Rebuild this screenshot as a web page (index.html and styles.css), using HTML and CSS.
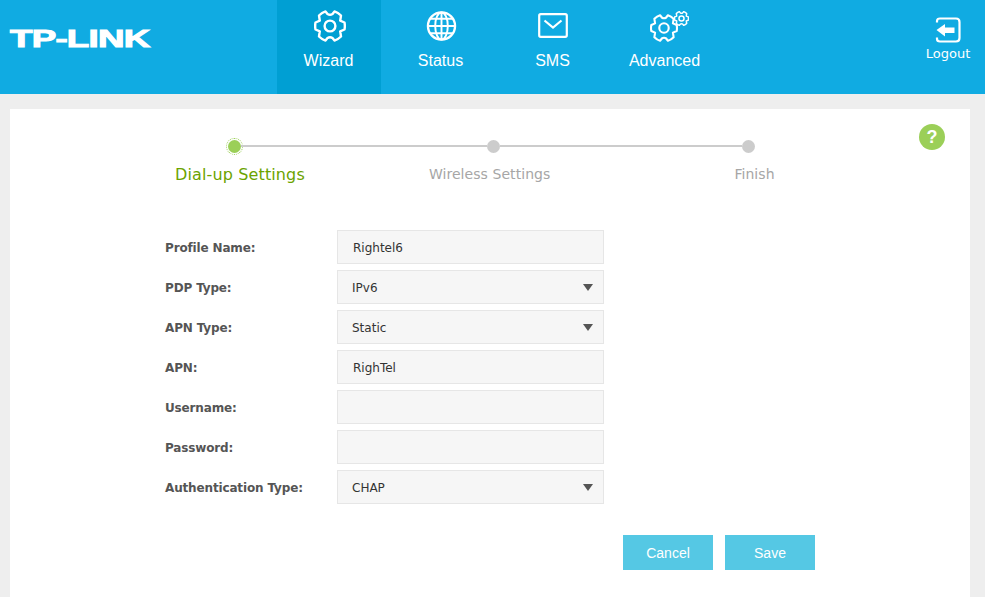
FILE: index.html
```html
<!DOCTYPE html>
<html lang="en">
<head>
<meta charset="utf-8">
<title>TP-LINK Wizard</title>
<link rel="stylesheet" href="styles.css">
</head>
<body>
<svg class="defs" width="0" height="0" aria-hidden="true">
  <symbol id="gear" viewBox="0 0 32 32">
    <path d="M30.5 12.5Q31.2 16 30.5 19.5L26.200 21.300L27 26.500Q24 29.500 20.500 30.600L18.500 28Q16 26.400 13.500 28L11.500 30.600Q8 29.500 5 26.500L5.800 21.300L1.500 19.500Q.8 16 1.500 12.500L5.800 10.700L5 5.500Q8 2.500 11.500 1.400L13.500 4Q16 5.600 18.500 4L20.500 1.400Q24 2.500 27 5.500L26.200 10.700Z" fill="none" stroke="currentColor" stroke-linejoin="round"/>
    <circle cx="16" cy="16" r="5.400" fill="none" stroke="currentColor"/>
  </symbol>
</svg>
<header class="topbar">
  <div class="logo"><span class="logo-text">TP-LINK</span></div>
  <nav class="nav">
    <a class="nav-item active">
      <svg class="icon-gear"><use href="#gear"/></svg>
      <span class="nav-label">Wizard</span>
    </a>
    <a class="nav-item">
      <svg class="icon-globe" viewBox="0 0 32 32" fill="none" stroke="currentColor" stroke-width="2">
        <circle cx="16" cy="16" r="14" stroke-width="2.400"/>
        <ellipse cx="16" cy="16" rx="6.500" ry="14"/>
        <path d="M16 2V30M2 16H30M4.500 8.500H27.500M4.500 23.500H27.500"/>
      </svg>
      <span class="nav-label">Status</span>
    </a>
    <a class="nav-item">
      <svg class="icon-mail" viewBox="0 0 30 25" fill="none" stroke="currentColor" stroke-width="2">
        <rect x="1.200" y="1.200" width="27.600" height="22.600" rx="1.500" stroke-width="2.200"/>
        <path d="M6.500 7.500L15 14.500L23.500 7.500" stroke-width="2.200"/>
      </svg>
      <span class="nav-label">SMS</span>
    </a>
    <a class="nav-item">
      <span class="gears">
        <svg class="icon-gear-main"><use href="#gear"/></svg>
        <svg class="icon-gear-small"><use href="#gear"/></svg>
      </span>
      <span class="nav-label">Advanced</span>
    </a>
  </nav>
  <a class="logout">
    <svg class="icon-logout" viewBox="0 0 26 26">
      <path d="M2 5.500V4Q2 1.500 5 1.500H21Q24.500 1.500 24.500 5V21Q24.500 24.500 21 24.500H5Q2 24.500 2 22V20.500" fill="none" stroke="currentColor" stroke-width="2.200"/>
      <path d="M1.500 13L10 7V10.500H19.500V16H10V19.500Z" fill="currentColor"/>
    </svg>
    <span>Logout</span>
  </a>
</header>
<main class="page">
  <section class="card">
    <a class="help">?</a>
    <div class="track">
      <span class="dot current"></span>
      <span class="line first"></span>
      <span class="dot"></span>
      <span class="line second"></span>
      <span class="dot"></span>
    </div>
    <div class="steps">
      <span class="step current">Dial-up Settings</span>
      <span class="step wireless">Wireless Settings</span>
      <span class="step finish">Finish</span>
    </div>
    <form class="form">
      <label class="row"><span class="name">Profile Name:</span><input class="field" value="Rightel6"></label>
      <label class="row"><span class="name">PDP Type:</span><span class="choice"><select class="field pick"><option>IPv6</option></select></span></label>
      <label class="row"><span class="name">APN Type:</span><span class="choice"><select class="field pick"><option>Static</option></select></span></label>
      <label class="row"><span class="name">APN:</span><input class="field" value="RighTel"></label>
      <label class="row"><span class="name">Username:</span><input class="field"></label>
      <label class="row"><span class="name">Password:</span><input class="field" type="password"></label>
      <label class="row"><span class="name">Authentication Type:</span><span class="choice"><select class="field pick"><option>CHAP</option></select></span></label>
      <div class="actions">
        <button class="btn" type="button">Cancel</button>
        <button class="btn" type="button">Save</button>
      </div>
    </form>
  </section>
</main>
</body>
</html>
```
FILE: styles.css
```css
* { box-sizing: border-box; }
html, body { height: 100%; }
body {
  margin: 0;
  background: #eeeeee;
  overflow: hidden;
  font-family: "DejaVu Sans", Verdana, sans-serif;
}
.defs { display: block; position: absolute; }
.topbar {
  display: flex;
  height: 94px;
  background: #10abe2;
  color: #fff;
}
.logo { width: 277px; padding: 26px 0 0 10px; }
.logo-text {
  display: block;
  width: 142px;
  font: 900 24px/26px "Liberation Sans", Arial, sans-serif;
  -webkit-text-stroke: 1px #fff;
  transform: scaleX(1.53);
  transform-origin: 0 50%;
  letter-spacing: -0.5px;
}
.nav { display: flex; gap: 8px; flex: 1; }
.nav-item {
  display: flex;
  flex-direction: column;
  align-items: center;
  width: 104px;
  height: 94px;
  font: 16px/20px "Liberation Sans", Arial, sans-serif;
  color: #fff;
  stroke-width: 2.4;
}
.nav-label { margin: 9px 1px 0 0; }
.nav-item.active { background: #009fd3; }
.nav-item > svg { display: block; }
.icon-gear { width: 32px; height: 32px; margin: 10px 0 0 2px; }
.icon-globe { width: 31px; height: 32px; margin: 10px 0 0 1px; }
.icon-mail { width: 30px; height: 25px; margin: 13px 0 4px; }
.gears { display: block; position: relative; width: 40px; height: 32px; margin-top: 10px; }
.icon-gear-main { display: block; width: 28px; height: 28px; margin: 4px 0 0 5px; }
.icon-gear-small { position: absolute; left: 29px; top: 1px; width: 15px; height: 15px; stroke-width: 3.200; }
.logout {
  display: flex;
  flex-direction: column;
  align-items: center;
  width: 70px;
  padding-top: 17px;
  margin-right: 2px;
  font-size: 13px;
  line-height: 16px;
  color: #fff;
}
.icon-logout { width: 26px; height: 26px; margin-bottom: 3px; }
.page { padding: 15px 15px 0 10px; }
.card {
  position: relative;
  height: 500px;
  background: #fff;
  padding-top: 29px;
}
.help {
  position: absolute;
  right: 25px;
  top: 15px;
  width: 26px;
  height: 26px;
  border-radius: 50%;
  background: #9bcf58;
  color: #fff;
  font: bold 18px/26px "Liberation Sans", Arial, sans-serif;
  text-align: center;
}
.track {
  display: flex;
  align-items: center;
  height: 16px;
  margin-left: 218px;
}
.dot {
  flex: none;
  width: 13px;
  height: 13px;
  border-radius: 50%;
  background: #cccccc;
}
.dot.current {
  background: #9bcf58;
  box-shadow: 0 0 0 1.500px #fff;
  outline: 1px dotted #9bcf58;
  outline-offset: 1.500px;
}
.line { flex: none; height: 2px; background: #cccccc; }
.line.first { width: 246px; }
.line.second { width: 242px; }
.steps { display: flex; align-items: flex-start; margin: 11px 0 0 165px; }
.step { font-size: 14px; line-height: 18px; color: #a6a6a6; letter-spacing: 0.06px; }
.step.current { font-size: 16px; line-height: 20px; color: #6ca300; letter-spacing: 0.13px; }
.wireless { margin-left: 124px; }
.finish { margin-left: 184px; }
.form { display: flex; flex-direction: column; gap: 6px; margin: 45px 0 0 155px; width: 439px; }
.row { display: flex; align-items: center; height: 34px; }
.name { width: 172px; padding-top: 2px; font-size: 12px; letter-spacing: -0.15px; font-weight: bold; color: #555555; }
.field {
  display: block;
  width: 267px;
  height: 34px;
  padding: 2px 15px 0;
  border: 1px solid #e6e6e6;
  border-radius: 0;
  background: #f6f6f6;
  color: #333;
  font: 12px "DejaVu Sans", Verdana, sans-serif;
  outline: 0;
}
.choice { position: relative; display: block; }
.choice::after {
  content: "";
  position: absolute;
  right: 11px;
  top: 14px;
  border: 5px solid transparent;
  border-top: 7px solid #555555;
  border-bottom: 0;
}
.pick { appearance: none; -webkit-appearance: none; padding-left: 14px; }
.actions { display: flex; gap: 12px; margin: 25px -211px 0 0; justify-content: flex-end; }
.btn {
  width: 90px;
  height: 35px;
  border: 0;
  padding: 0;
  background: #55c8e4;
  color: #fff;
  font: 14px "Liberation Sans", Arial, sans-serif;
}
```
